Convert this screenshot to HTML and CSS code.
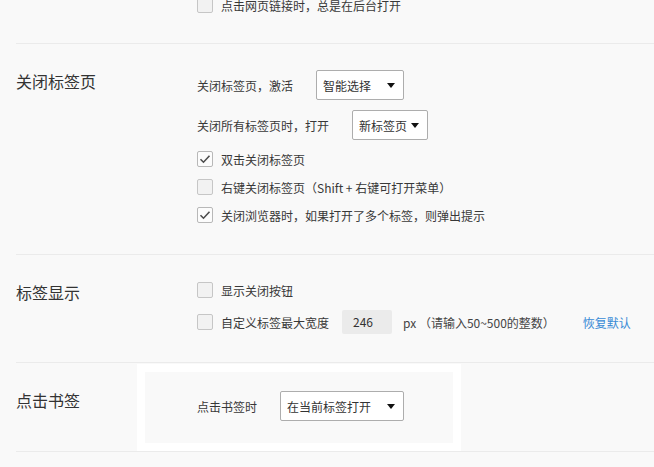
FILE: index.html
```html
<!DOCTYPE html>
<html lang="zh-CN">
<head>
    <meta charset="UTF-8">
    <title>标签设置</title>
    <link rel="stylesheet" href="styles.css">
</head>
<body>
    <div class="page">
        <div class="section section-first">
            <div class="section-title"></div>
            <div class="section-body body-first">
                <div class="check-row"><span class="check"></span>点击网页链接时，总是在后台打开</div>
            </div>
        </div>

        <div class="section">
            <div class="section-title">关闭标签页</div>
            <div class="section-body body-close">
                <div class="select-row">
                    <span class="label">关闭标签页，激活</span>
                    <div class="select sel-smart"><span>智能选择</span><i class="arrow"></i></div>
                </div>
                <div class="select-row">
                    <span class="label">关闭所有标签页时，打开</span>
                    <div class="select sel-new"><span>新标签页</span><i class="arrow"></i></div>
                </div>
                <div class="check-row first-check">
                    <span class="check checked"><svg width="12" height="10" viewBox="0 0 12 10"><path d="M1.5 5.2l3 3 6-6.4" fill="none" stroke="#4d4d4d" stroke-width="1.6"/></svg></span>双击关闭标签页
                </div>
                <div class="check-row"><span class="check"></span>右键关闭标签页（Shift + 右键可打开菜单）</div>
                <div class="check-row">
                    <span class="check checked"><svg width="12" height="10" viewBox="0 0 12 10"><path d="M1.5 5.2l3 3 6-6.4" fill="none" stroke="#4d4d4d" stroke-width="1.6"/></svg></span>关闭浏览器时，如果打开了多个标签，则弹出提示
                </div>
            </div>
        </div>

        <div class="section">
            <div class="section-title">标签显示</div>
            <div class="section-body body-show">
                <div class="check-row"><span class="check"></span>显示关闭按钮</div>
                <div class="check-row width-row">
                    <span class="check"></span>自定义标签最大宽度
                    <span class="num-input">246</span>
                    <span class="hint">px （请输入50~500的整数）</span>
                    <a class="reset" href="#">恢复默认</a>
                </div>
            </div>
        </div>

        <div class="section">
            <div class="section-title">点击书签</div>
            <div class="section-body body-bookmark">
                <div class="select-row">
                    <span class="label">点击书签时</span>
                    <div class="select sel-bookmark"><span>在当前标签打开</span><i class="arrow"></i></div>
                </div>
            </div>
        </div>
        <div class="section section-last"></div>
    </div>
</body>
</html>
```

FILE: styles.css
```css
*{
    margin: 0;
    padding: 0;
    box-sizing: border-box;
}
html,body{
    background: #f9f9f9;
}
body{
    font-family: "Noto Sans CJK SC", "Microsoft YaHei", sans-serif;
    font-size: 12px;
    color: #383838;
    overflow: hidden;
}
.page{
    margin-top: -18px;
}
.section{
    display: flex;
    margin-left: 16px;
    padding: 9px 0 8px;
    border-top: 1px solid #ebebeb;
}
.section-first{
    border-top: none;
}
.section-last{
    height: 12px;
    padding: 0;
}
.section-title{
    width: 129px;
    flex-shrink: 0;
    padding-top: 16px;
    font-size: 16px;
    line-height: 24px;
    color: #333;
}
.section-body{
    flex: 1;
    padding: 17px 0 17px 52px;
}
.body-first{
    padding-top: 0;
    padding-bottom: 16px;
}
.body-show{
    padding-top: 12px;
}
.body-bookmark{
    flex: none;
    width: 308px;
    padding-top: 19px;
    padding-bottom: 22px;
    box-shadow: 0 0 0 8px #fff;
}

/* rows */
.select-row{
    display: flex;
    align-items: center;
    height: 30px;
    margin-bottom: 10px;
}
.body-bookmark .select-row{
    margin-bottom: 0;
}
.label{
    margin-right: 23px;
}
.select{
    display: flex;
    align-items: center;
    justify-content: space-between;
    height: 30px;
    padding: 0 8px 0 6px;
    background: #fff;
    border: 1px solid #adadad;
    border-radius: 2px;
    color: #333;
}
.sel-smart{
    width: 88px;
}
.sel-new{
    width: 76px;
}
.sel-bookmark{
    width: 124px;
}
.arrow{
    width: 0;
    height: 0;
    border-left: 4px solid transparent;
    border-right: 4px solid transparent;
    border-top: 5px solid #111;
}

.check-row{
    display: flex;
    align-items: center;
    height: 28px;
}
.first-check{
    margin-top: -5px;
}
.check{
    display: flex;
    align-items: center;
    justify-content: center;
    width: 16px;
    height: 16px;
    margin-right: 8px;
    background: #f2f2f2;
    border: 1px solid #c6c6c6;
    border-radius: 2px;
}
.check.checked{
    background: #fcfcfc;
    border-color: #b8b8b8;
}
.width-row{
    height: 30px;
    margin-top: 3px;
}
.num-input{
    width: 50px;
    height: 24px;
    line-height: 24px;
    margin-left: 13px;
    padding-left: 11px;
    background: #ebebeb;
    border-radius: 2px;
    color: #333;
}
.hint{
    margin-left: 11px;
    color: #444;
}
.reset{
    margin-left: 28px;
    color: #3a8bd6;
    text-decoration: none;
}
```
